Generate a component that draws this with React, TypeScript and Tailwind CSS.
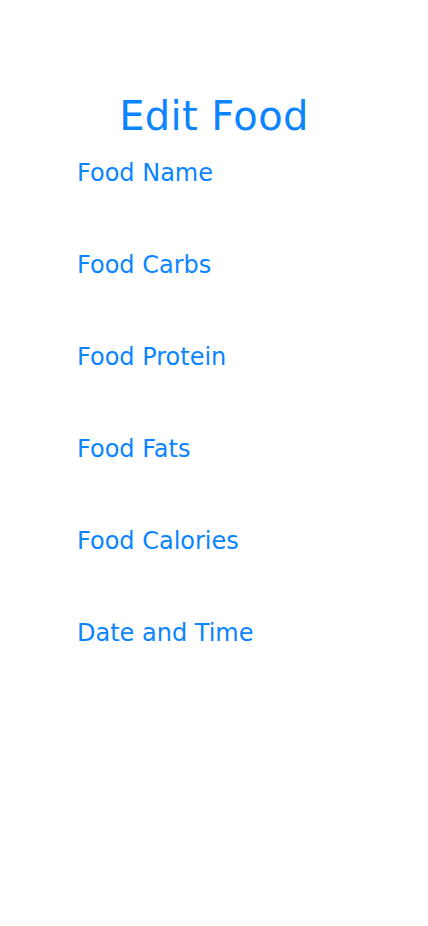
import React from "react";

const fields = [
  "Food Name",
  "Food Carbs",
  "Food Protein",
  "Food Fats",
  "Food Calories",
  "Date and Time",
];

export default function App() {
  return (
    <div
      className="min-h-[926px] w-full bg-white text-[#0a84ff]"
      style={{ fontFamily: "'DejaVu Sans', sans-serif" }}
    >
      <div className="flex flex-col pt-[88px]">
        <h1 className="text-center text-[40px] leading-[56px] font-normal tracking-[0.4px]">Edit Food</h1>
        <div className="mt-[13px] flex flex-col px-[77px]">
          {fields.map((f) => (
            <div key={f} className="flex h-[92px] flex-col">
              <label className="text-[24px] leading-[32px]">{f}</label>
            </div>
          ))}
        </div>
      </div>
    </div>
  );
}
